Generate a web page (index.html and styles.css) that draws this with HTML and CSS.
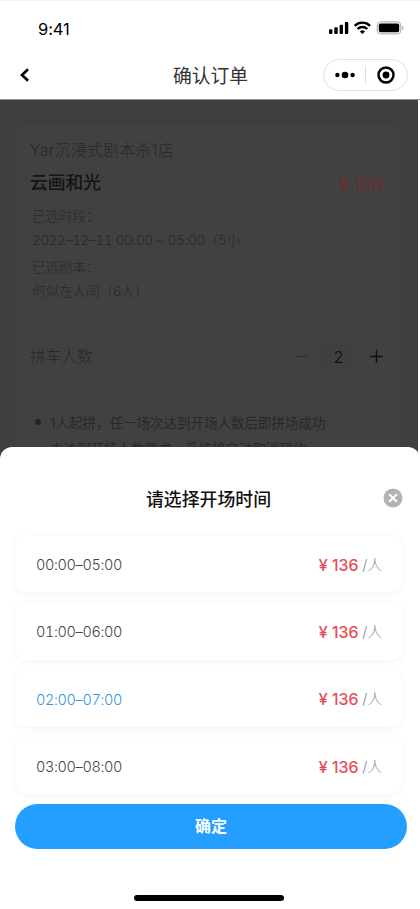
FILE: index.html
```html
<!DOCTYPE html>
<html lang="zh-CN">
<head>
<meta charset="utf-8">
<title>确认订单</title>
<link rel="stylesheet" href="styles.css">
</head>
<body>
<div class="screen">
  <div class="status">
    <span class="clock">9:41</span>
    <svg class="status-icons" width="76" height="14" viewBox="0 0 76 14">
      <rect x="0" y="8.2" width="3.4" height="4.8" rx="1"/>
      <rect x="5.3" y="6.2" width="3.4" height="6.8" rx="1"/>
      <rect x="10.6" y="3.8" width="3.4" height="9.2" rx="1"/>
      <rect x="15.9" y="1" width="3.4" height="12" rx="1"/>
      <g fill="none" stroke="#000" stroke-width="2.4">
        <path d="M25.7 4.8a11 11 0 0 1 15.4 0"/>
        <path d="M28.5 8a7 7 0 0 1 9.8 0"/>
      </g>
      <path d="M30.8 10.4a4 4 0 0 1 5.2 0l-2.6 2.7z"/>
      <rect x="48.2" y=".9" width="23.6" height="12" rx="3.4" fill="none" stroke="#a6a6a6"/>
      <rect x="49.8" y="2.5" width="20.4" height="8.8" rx="1.8"/>
      <path d="M73.2 4.8c1.5.5 1.5 3.7 0 4.2z" fill="#a6a6a6"/>
    </svg>
  </div>
  <div class="nav">
    <svg class="back" width="10" height="14" viewBox="0 0 10 14"><path d="M8 1.3 2 7 8 12.7" fill="none" stroke="#000" stroke-width="2.6"/></svg>
    <h1>确认订单</h1>
    <div class="capsule">
      <svg width="20" height="8" viewBox="0 0 20 8"><circle cx="2.4" cy="4" r="2.2"/><circle cx="10" cy="4" r="3.3"/><circle cx="17.6" cy="4" r="2.2"/></svg>
      <i></i>
      <svg width="18" height="18" viewBox="0 0 18 18"><circle cx="9" cy="9" r="7.5" fill="none" stroke="#000" stroke-width="2.5"/><circle cx="9" cy="9" r="3.4"/></svg>
    </div>
  </div>
  <div class="page">
    <div class="order">
      <div class="shop">Yar沉浸式剧本杀1店</div>
      <div class="name"><b>云画和光</b><span>¥ 136</span></div>
      <div class="info">已选时段：</div>
      <div class="info date">2022–12–11 00:00 ~ 05:00（5小</div>
      <div class="info script">已选剧本：</div>
      <div class="info people">何似在人间（6人）</div>
      <div class="count">
        <span class="label">拼车人数</span>
        <svg width="10" height="12" viewBox="0 0 10 12"><path d="M0 5.5h10" stroke="#2e2e2e" stroke-width="1.2"/></svg>
        <span class="num">2</span>
        <svg width="13" height="13" viewBox="0 0 13 13"><path d="M0 6.5h13M6.5 0v13" stroke="#111" stroke-width="1.5"/></svg>
      </div>
      <ul class="rules">
        <li>1人起拼，任一场次达到开场人数后即拼场成功</li>
        <li class="more">未达到开场人数要求，系统将自动取消预约</li>
      </ul>
    </div>
  </div>
  <div class="sheet">
    <div class="sheet-head">
      <h2>请选择开场时间</h2>
      <svg class="close" width="20" height="20" viewBox="0 0 20 20"><circle cx="10" cy="10" r="9.5" fill="#b3b3b3"/><path d="m6.2 6.2 7.6 7.6m0-7.6-7.6 7.6" stroke="#fff" stroke-width="2"/></svg>
    </div>
    <div class="slots">
      <div class="slot"><span class="time">00:00–05:00</span><span class="price">¥ 136</span><span class="unit">/人</span></div>
      <div class="slot"><span class="time">01:00–06:00</span><span class="price">¥ 136</span><span class="unit">/人</span></div>
      <div class="slot active"><span class="time">02:00–07:00</span><span class="price">¥ 136</span><span class="unit">/人</span></div>
      <div class="slot"><span class="time">03:00–08:00</span><span class="price">¥ 136</span><span class="unit">/人</span></div>
    </div>
    <div class="confirm">确定</div>
    <div class="home"></div>
  </div>
</div>
</body>
</html>
```
FILE: styles.css
```css
* { box-sizing: border-box; }
body {
  margin: 0;
  background: #fff;
  font-family: Inter, "Noto Sans CJK SC", sans-serif;
}
h1, h2, ul { margin: 0; padding: 0; font-weight: 400; }
svg { display: block; flex: none; }
.screen {
  width: 420px;
  height: 909px;
  overflow: hidden;
  display: flex;
  flex-direction: column;
  border-top: 1px solid #f3f3f3;
}
.status {
  height: 50px;
  flex: none;
  display: flex;
  justify-content: space-between;
  padding: 16px 15px 0 38px;
}
.clock { font-size: 16.5px; line-height: 24px; letter-spacing: -.1px; }
.status-icons { margin-top: 4px; }
.nav {
  height: 49px;
  flex: none;
  display: grid;
  grid-template-columns: 1fr auto 1fr;
  align-items: center;
  padding: 0 12.5px 0 19.5px;
  border-bottom: 1px solid #909090;
}
.nav h1 { font-size: 18.8px; line-height: 28px; padding-top: 3px; color: #333; margin-right: 6px; }
.capsule {
  justify-self: end;
  width: 85px;
  height: 32px;
  border: 1px solid #e2e2e2;
  border-radius: 16px;
  display: flex;
  align-items: center;
  justify-content: space-between;
  padding: 0 12px 0 11px;
}
.capsule i { width: 1px; height: 18px; background: #e0e0e0; }
.page {
  width: 418px;
  height: 368px;
  flex: none;
  background: #3f3f3f;
  padding: 24px 16px 0;
  overflow: hidden;
}
.order {
  height: 380px;
  background: #414141;
  border-radius: 8px;
  padding: 15px 19px 0 14px;
  color: #282828;
  font-weight: 300;
}
.shop { font-size: 15.7px; line-height: 24px; letter-spacing: .4px; }
.name { display: flex; justify-content: space-between; line-height: 28px; margin-top: 6px; font-size: 17.8px; }
.name b { color: #141414; font-weight: 500; }
.name span { color: #6a2e2e; font-weight: 400; padding-top: 2px; -webkit-text-stroke: .2px #6a2e2e; }
.info { font-size: 13.5px; line-height: 20px; margin-left: 2px; white-space: nowrap; }
.name + .info { margin-top: 7px; }
.date { margin-top: 4px; font-variant-numeric: tabular-nums; letter-spacing: -.3px; }
.script { margin-top: 7px; }
.people { margin-top: 4px; }
.count {
  margin-top: 19px;
  height: 73px;
  display: flex;
  align-items: center;
  border-top: 1px solid #3c3c3c;
  border-bottom: 1px solid #3c3c3c;
}
.count .label { font-size: 15.7px; line-height: 24px; margin: 0 auto 0 0; }
.num { width: 39px; height: 26px; line-height: 27px; margin: 0 12px 0 12px; text-align: center; background: #404040; border-radius: 4px; color: #141414; font-size: 16px; font-weight: 400; }
.rules { list-style: none; padding-top: 17px; }
.rules li { position: relative; padding-left: 20px; font-size: 13.5px; line-height: 26px; white-space: nowrap; }
.rules li:first-child::before { content: ""; position: absolute; left: 5px; top: 9px; width: 6px; height: 6px; border-radius: 50%; background: #242424; }
.sheet {
  position: relative;
  flex: 1;
  margin-top: -21px;
  background: #fff;
  border-radius: 12px 12px 0 0;
  display: flex;
  flex-direction: column;
}
.sheet-head {
  height: 88px;
  flex: none;
  display: grid;
  grid-template-columns: 1fr auto 1fr;
  align-items: center;
  padding: 15px 17px 0 14px;
}
.sheet-head h2 { grid-column: 2; font-size: 17.9px; line-height: 26px; padding-top: 3px; font-weight: 500; color: #111; }
.close { justify-self: end; margin-top: -2px; }
.slots { display: flex; flex-direction: column; gap: 10px; padding: 0 18px 0 16px; }
.slot {
  height: 57.3px;
  border-radius: 10px;
  box-shadow: 0 1px 7px rgba(0, 0, 0, .05);
  display: flex;
  align-items: center;
  padding: 2px 20px 0;
  font-size: 14.5px;
}
.time { color: #444; font-weight: 300; margin-right: auto; font-variant-numeric: tabular-nums; letter-spacing: -.38px; }
.active .time { color: #3296e0; }
.price { color: #e5484d; font-size: 16px; -webkit-text-stroke: .2px #e5484d; }
.unit { color: #888; font-weight: 300; margin-left: 4px; font-size: 14.6px; line-height: 20px; }
.confirm {
  height: 45px;
  flex: none;
  margin: 10px 13px 0 15px;
  border-radius: 23px;
  background: #249eff;
  color: #fff;
  font-size: 16px;
  font-weight: 700;
  line-height: 45px;
  text-align: center;
}
.home { width: 150px; height: 6px; border-radius: 3px; background: #000; margin: 46px 0 0 134px; }
```
